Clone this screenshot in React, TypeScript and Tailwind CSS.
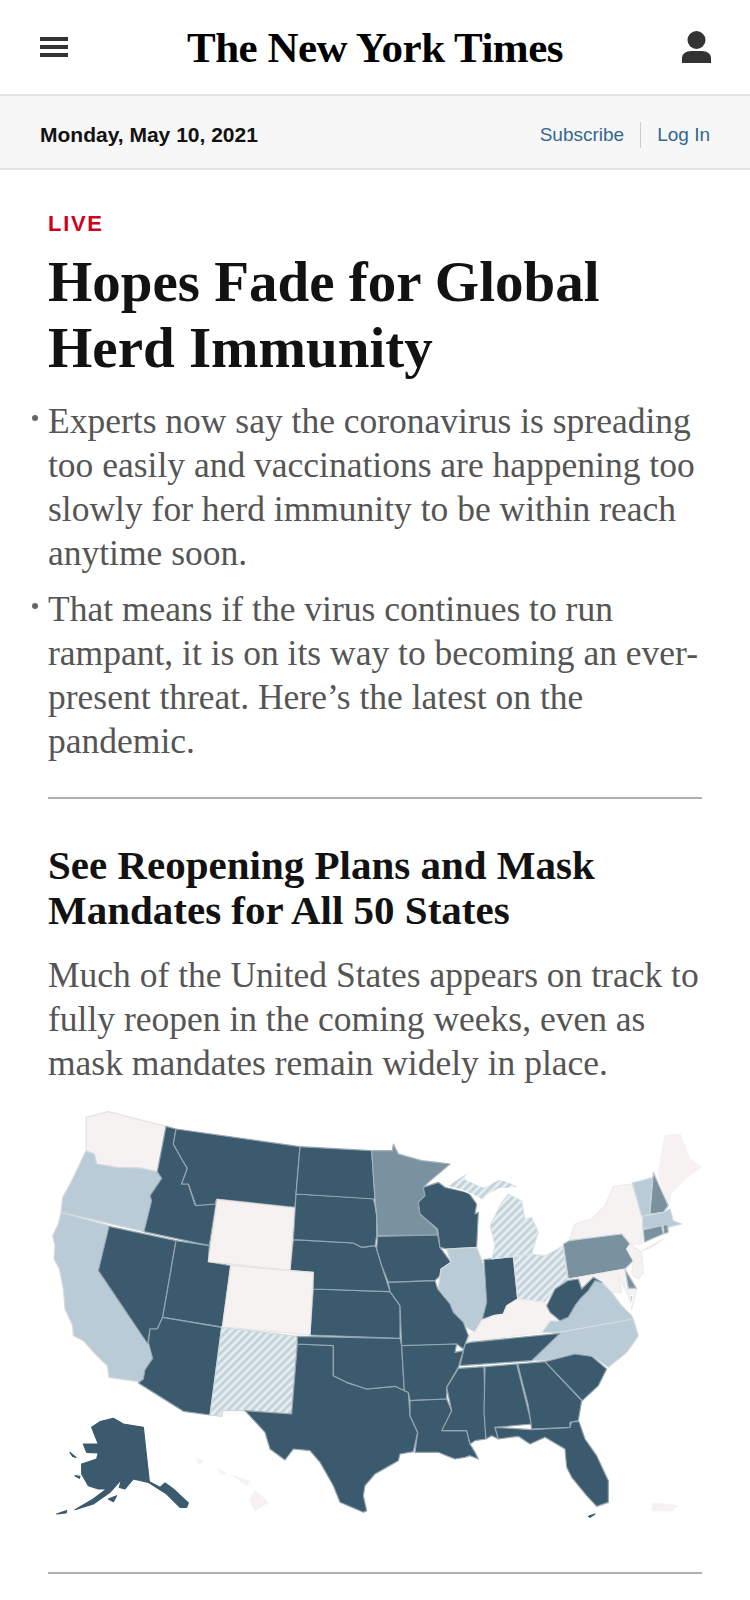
const DARK = '#3b5a6e';
const MID = '#7a919f';
const LIGHT = '#b8cbd6';
const PALE = '#f5f2f1';
const HATCH = 'url(#hatch)';

// map outlines are traced in 3x page pixels, per crop of the map
function shift(points: string, dx: number, dy: number) {
  return points
    .trim()
    .split(/\s+/)
    .map((p) => {
      const [x, y] = p.split(',').map(Number);
      return `${x + dx},${y + dy}`;
    })
    .join(' ');
}

type State = { fill: string; line?: string; d: string; dx?: number; dy?: number };

const STATES: State[] = [
  { fill: PALE, line: '#e6e3e2', d: '258,55 325,38 498,82 472,218 420,207 350,205 290,195 283,165 258,155 258,120' },
  { fill: LIGHT, line: '#d5dadd', d: '258,155 283,165 290,195 350,205 420,207 472,218 485,238 450,290 455,305 432,398 183,340 188,295 205,265 225,225' },
  { fill: LIGHT, line: '#d5dadd', d: '183,340 327,380 295,515 445,740 458,778 435,810 428,850 415,848 327,835 322,800 290,770 250,725 220,710 218,680 195,630 190,570 178,510 162,480 165,440 158,410 175,375' },
  { fill: DARK, d: '327,382 528,425 488,655 472,690 450,690 443,735 295,515' },
  { fill: DARK, d: '498,82 528,90 520,135 545,180 562,208 545,255 565,255 585,318 645,315 650,302 628,440 432,398 455,305 450,290 485,238 472,218' },
  { fill: DARK, d: '528,90 900,143 885,325 650,300 645,315 588,320 565,255 545,255 562,208 545,180 520,135' },
  { fill: DARK, d: '528,425 628,440 625,488 692,500 667,684 488,655' },
  { fill: DARK, d: '488,655 665,685 630,948 550,937 415,852 430,840 435,812 458,778 445,730 450,690 472,690' },
  { fill: HATCH, line: '#cfd8dc', d: '665,685 892,712 875,945 735,935 668,935 665,952 630,948' },
  { fill: DARK, d: '892,735 1000,740 1000,830 1040,850 1100,870 1185,862 1225,880 1230,950 1253,1000 1240,1058 1200,1065 1195,1085 1125,1125 1095,1160 1090,1190 1100,1235 1090,1240 1020,1210 1000,1160 960,1090 930,1055 880,1050 855,1083 810,1050 795,1000 735,935 875,945' },
  { fill: DARK, d: '892,712 1200,718 1205,740 1213,875 1225,880 1185,862 1100,870 1040,850 1000,830 1000,740 892,735' },
  { fill: DARK, d: '930,708 940,570 1170,578 1200,620 1200,718' },
  { fill: DARK, d: '880,422 1060,432 1085,445 1125,440 1130,450 1145,500 1170,578 940,570 940,520 870,515' },
  { fill: DARK, d: '888,285 1120,298 1125,320 1130,350 1130,410 1125,440 1085,445 1060,432 880,422' },
  { fill: DARK, d: '900,143 1115,155 1125,300 888,285' },
  { fill: PALE, line: '#e6e3e2', d: '652,302 883,327 870,515 625,488' },
  { fill: PALE, line: '#e6e3e2', d: '692,500 940,520 930,708 667,684' },
  { fill: MID, line: '#a3b2bc', d: '-10,155 52,155 55,135 70,165 140,185 185,190 225,195 160,250 145,265 150,290 130,310 135,345 185,390 188,408 8,410 5,350 0,300', dx: 1125 },
  { fill: DARK, d: '8,412 188,408 195,445 228,490 198,510 195,530 180,545 40,550 20,500 5,450', dx: 1125 },
  { fill: DARK, d: '190,250 210,265 280,280 305,315 300,345 310,340 305,445 215,450 195,445 188,390 135,345 130,310 150,290 145,265', dx: 1125 },
  { fill: LIGHT, line: '#d5dadd', d: '215,450 305,445 325,495 335,610 320,665 300,700 275,685 265,670 235,640 225,615 190,570 195,530 198,510 228,490', dx: 1125 },
  { fill: DARK, d: '327,482 415,473 428,600 395,620 385,645 355,650 322,660 335,610', dx: 1125 },
  { fill: HATCH, line: '#dfe5e8', d: '345,380 380,310 400,285 440,305 450,360 470,355 490,400 470,465 415,473 350,480 360,440', dx: 1125 },
  { fill: HATCH, line: '#ffffff', d: '215,262 285,215 270,240 325,265 375,240 415,255 430,265 370,270 335,290 325,305 300,290 265,275', dx: 1125 },
  { fill: HATCH, line: '#dfe5e8', d: '415,473 470,465 510,470 565,440 578,545 540,570 510,610 470,605 428,600', dx: 1125 },
  { fill: PALE, line: '#eeeaea', d: '770,255 805,350 800,435 765,435 740,405 582,425 600,375 650,360 690,320 715,262', dx: 1125 },
  { fill: MID, line: '#c4ced4', d: '565,435 582,425 740,405 765,435 755,450 775,485 750,510 580,540', dx: 1125 },
  { fill: PALE, line: '#eeeaea', d: '580,540 750,510 760,570 785,568 770,630 760,590 730,530 740,580 710,580 680,550 655,535 620,570 610,540', dx: 1125 },
  { fill: PALE, line: '#eeeaea', d: '765,435 800,460 805,520 790,540 770,525 775,485 755,450', dx: 1125 },
  { fill: PALE, line: '#eeeaea', d: '800,455 865,420 830,445', dx: 1125 },
  { fill: MID, line: '#c4ced4', d: '750,510 785,568 760,568', dx: 1125 },
  { fill: LIGHT, line: '#d5dadd', d: '655,540 680,550 710,580 740,620 770,650 775,660 555,700 500,700 525,665 555,665 580,655 600,620 615,600 640,575', dx: 1125 },
  { fill: LIGHT, line: '#ffffff', d: '765,590 775,590 765,630', dx: 1125 },
  { fill: LIGHT, line: '#d5dadd', d: '775,660 790,710 770,740 755,760 700,805 650,770 600,765 515,785 470,785 505,745 555,700', dx: 1125 },
  { fill: PALE, line: '#eeeaea', d: '320,665 355,650 385,645 395,620 428,600 470,605 510,610 515,620 525,640 555,665 525,665 500,700 290,728 275,730 285,705 300,700', dx: 1125 },
  { fill: DARK, d: '578,545 610,540 620,570 655,535 680,550 660,545 640,575 615,600 600,620 580,655 555,665 525,640 515,620 540,570', dx: 1125 },
  { fill: DARK, d: '555,703 470,785 255,800 270,735 285,730', dx: 1125 },
  { fill: DARK, d: '40,550 180,545 188,570 225,615 235,640 265,670 280,710 265,750 245,735 80,742 75,620 45,578', dx: 1125 },
  { fill: DARK, d: '80,140 245,135 240,160 265,155 250,205 215,265 215,300 105,305 100,280 88,275', dx: 1125, dy: 600 },
  { fill: DARK, d: '105,305 215,300 230,335 205,395 275,395 285,435 300,460 310,480 285,470 270,475 240,480 215,470 190,460 120,460 128,400 105,350', dx: 1125, dy: 600 },
  { fill: DARK, d: '250,208 327,203 332,420 300,425 285,435 275,395 200,395 230,335 215,265', dx: 1125, dy: 600 },
  { fill: DARK, d: '330,203 425,195 470,375 360,385 370,420 350,410 333,420 327,340', dx: 1125, dy: 600 },
  { fill: DARK, d: '360,385 470,392 585,385 590,368 612,368 630,420 665,470 700,545 700,610 665,622 635,590 590,535 575,505 570,450 510,415 465,435 430,412 370,420', dx: 1125, dy: 600 },
  { fill: DARK, d: '428,195 510,188 620,305 610,365 585,370 585,385 470,390 460,320', dx: 1125, dy: 600 },
  { fill: DARK, d: '510,188 600,165 650,172 695,210 670,260 622,305', dx: 1125, dy: 600 },
  { fill: DARK, line: DARK, d: '640,652 660,645 645,655', dx: 1125, dy: 600 },
  // new england
  { fill: PALE, line: '#f5f2f1', d: '870,110 915,105 945,180 978,205 930,240 890,280 880,320 850,225', dx: 1125 },
  { fill: LIGHT, line: '#d5dadd', d: '772,252 835,235 825,315 825,345 800,352', dx: 1125 },
  { fill: MID, line: '#c4ced4', d: '835,220 880,320 865,340 825,345', dx: 1125 },
  { fill: LIGHT, line: '#d5dadd', d: '803,352 865,340 885,330 895,365 920,375 880,385 803,388', dx: 1125 },
  { fill: MID, line: '#c4ced4', d: '805,392 860,380 865,405 808,430', dx: 1125 },
  { fill: MID, line: '#c4ced4', d: '865,378 878,378 880,400 867,405', dx: 1125 },
  // alaska, hawaii, puerto rico
  { fill: DARK, line: DARK, d: '275,385 300,368 340,358 370,375 430,385 448,548 480,565 495,552 520,570 565,612 560,625 540,625 500,585 445,550 400,540 375,570 358,565 365,540 330,580 280,615 225,632 280,600 320,570 295,570 265,560 245,525 245,495 290,480 295,462 260,460 250,435 295,435 285,410', dy: 600 },
  { fill: DARK, line: DARK, d: '170,645 200,635 198,642', dy: 600 },
  { fill: DARK, line: DARK, d: '210,460 228,475 218,472', dy: 600 },
  { fill: DARK, line: DARK, d: '325,600 350,590 340,608', dy: 600 },
  { fill: DARK, line: DARK, d: '225,530 240,532 238,538', dy: 600 },
  { fill: PALE, line: PALE, d: '765,575 805,610 765,635 750,600', dy: 600 },
  { fill: PALE, line: PALE, d: '655,510 680,525 665,525', dy: 600 },
  { fill: PALE, line: PALE, d: '700,530 750,548 740,558', dy: 600 },
  { fill: PALE, line: PALE, d: '590,482 610,485 600,497', dy: 600 },
  { fill: PALE, line: PALE, d: '833,612 905,620 890,635 833,635', dx: 1125, dy: 600 },
];

function UsMap() {
  return (
    <svg viewBox="0 0 2250 1410" className="block h-[470px] w-[750px]">
      <defs>
        <pattern id="hatch" width="17" height="17" patternUnits="userSpaceOnUse" patternTransform="rotate(45)">
          <rect width="17" height="17" fill="#e8edf0" />
          <rect width="9" height="17" fill="#c3d3db" />
        </pattern>
      </defs>
      {STATES.map((s, i) => (
        <polygon
          key={i}
          points={shift(s.d, s.dx ?? 0, s.dy ?? 0)}
          fill={s.fill}
          stroke={s.line ?? '#95a6b0'}
          strokeWidth={3.5}
          strokeLinejoin="round"
        />
      ))}
    </svg>
  );
}

function Bullet({ children }: { children: React.ReactNode }) {
  return (
    <li className="-ml-4 flex gap-2.5">
      <span className="mt-[16px] h-1.5 w-1.5 shrink-0 rounded-full bg-[#666666]" />
      <span>{children}</span>
    </li>
  );
}

export default function App() {
  return (
    <div className="w-[750px] bg-white">
      <header className="flex h-[96px] items-center justify-between border-b-2 border-[#e2e2e2] pl-10 pr-[39px]">
        <div className="flex w-7 flex-col gap-1">
          <span className="h-1 bg-[#333333]" />
          <span className="h-1 bg-[#333333]" />
          <span className="h-1 bg-[#333333]" />
        </div>
        <div className="font-['Liberation_Serif',serif] text-[43px] font-bold leading-none tracking-[-0.5px] text-black">
          The New York Times
        </div>
        <svg viewBox="0 0 29 32" className="h-8 w-[29px] fill-[#333333]">
          <ellipse cx="14.5" cy="9" rx="9" ry="9" />
          <path d="M0 32V27C0 23 4 20 9 20H20C25 20 29 23 29 27V32Z" />
        </svg>
      </header>

      <div className="flex h-[74px] items-center justify-between border-b-2 border-[#e2e2e2] bg-[#f7f7f7] pl-10 pr-10 pt-[6px]">
        <span className="font-['Liberation_Sans',sans-serif] text-[21px] font-bold text-[#121212]">
          Monday, May 10, 2021
        </span>
        <div className="flex items-center font-['Liberation_Sans',sans-serif] text-[19px] text-[#326891]">
          <span>Subscribe</span>
          <span className="mx-4 h-[26px] w-px bg-[#cccccc]" />
          <span>Log In</span>
        </div>
      </div>

      <main className="px-12 pt-[44px]">
        <div className="font-['Liberation_Sans',sans-serif] text-[22px] font-bold leading-5 tracking-[1.7px] text-[#d0021b]">
          LIVE
        </div>
        <h1 className="mt-[15px] font-['Liberation_Serif',serif] text-[57px] font-bold leading-[66px] text-[#121212]">
          Hopes Fade for Global
          <br />
          Herd Immunity
        </h1>

        <ul className="mt-[18px] font-['Liberation_Serif',serif] text-[35.5px] leading-[44px] text-[#555555]">
          <Bullet>
            Experts now say the coronavirus is spreading too easily and vaccinations are happening too slowly for herd
            immunity to be within reach anytime soon.
          </Bullet>
          <div className="h-[12px]" />
          <Bullet>
            That means if the virus continues to run rampant, it is on its way to becoming an ever-present threat.
            Here’s the latest on the pandemic.
          </Bullet>
        </ul>

        <hr className="mt-[34px] border-t-2 border-[#afafaf]" />

        <h2 className="mt-[44px] font-['Liberation_Serif',serif] text-[41px] font-bold leading-[45px] text-[#121212]">
          See Reopening Plans and Mask Mandates for All 50 States
        </h2>
        <p className="mt-[20px] font-['Liberation_Serif',serif] text-[35.5px] leading-[44px] text-[#555555]">
          Much of the United States appears on track to fully reopen in the coming weeks, even as mask mandates remain
          widely in place.
        </p>
      </main>

      <div className="mt-[14px]">
        <UsMap />
      </div>
      <div className="px-12 pt-[3px]">
        <hr className="border-t-2 border-[#afafaf]" />
      </div>
    </div>
  );
}
